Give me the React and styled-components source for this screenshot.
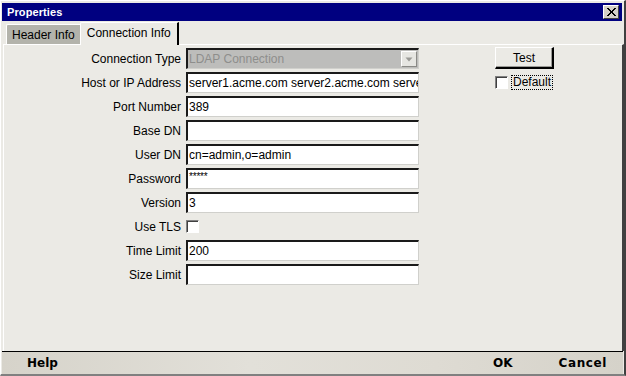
import React from "react";
import styled, { createGlobalStyle } from "styled-components";

const Global = createGlobalStyle`
  html, body { margin: 0; padding: 0; background: #ebeae5; }
  body { font-family: "Liberation Sans", Arial, sans-serif; font-size: 12px; color: #000; }
`;

const Window = styled.div`
  width: 626px;
  height: 376px;
  box-sizing: border-box;
  background: #ebeae5;
  border-style: solid;
  border-width: 1px 2px 2px 1px;
  border-color: #ffffff #404040 #808080 #ffffff;
  display: flex;
  flex-direction: column;
  padding: 2px 0 0 1px;
`;

const TitleBar = styled.div`
  height: 18px;
  margin-right: 2px;
  background: #000080;
  display: flex;
  align-items: center;
  justify-content: space-between;
  padding: 0 3px 0 5px;
`;

const Title = styled.span`
  color: #fff;
  font-weight: bold;
  font-size: 11px;
  letter-spacing: 0.1px;
`;

const CloseButton = styled.div`
  width: 16px;
  height: 14px;
  box-sizing: border-box;
  background: #d4d0c8;
  border-style: solid;
  border-width: 1px;
  border-color: #ffffff #404040 #404040 #ffffff;
  display: flex;
  align-items: center;
  justify-content: center;
`;

const TabStrip = styled.div`
  height: 22px;
  display: flex;
  align-items: flex-end;
  padding-left: 4px;
  margin-top: 1px;
`;

const Tab = styled.div`
  box-sizing: border-box;
  height: ${(p) => (p.$active ? "23px" : "20px")};
  padding: 0 ${(p) => (p.$active ? "6px" : "5px")};
  background: ${(p) => (p.$active ? "#ebeae5" : "#b3b3ab")};
  border-style: solid;
  border-width: 1px ${(p) => (p.$active ? "2px" : "0")} 0 1px;
  border-color: #ffffff #000 #000 #ffffff;
  border-top-left-radius: 2px;
  display: flex;
  align-items: center;
  padding-bottom: ${(p) => (p.$active ? "3px" : "0")};
  position: relative;
  z-index: ${(p) => (p.$active ? 1 : 0)};
  margin-bottom: ${(p) => (p.$active ? "-1px" : "0")};
`;

const Panel = styled.div`
  flex: 1;
  margin-left: 1px;
  border-style: solid;
  border-width: 1px 2px 0 1px;
  border-color: #ffffff #404040 #000 #ffffff;
  padding: 3px 0 0 2px;
`;

const FormGrid = styled.div`
  display: grid;
  grid-template-columns: 175px 233px 140px;
  column-gap: 5px;
  row-gap: 3px;
  grid-auto-rows: 21px;
`;

const Label = styled.div`
  display: flex;
  align-items: center;
  justify-content: flex-end;
  white-space: nowrap;
  font-size: 12px;
`;

const Field = styled.div`
  box-sizing: border-box;
  height: 21px;
  background: ${(p) => (p.$disabled ? "#bdbdbb" : "#ffffff")};
  color: ${(p) => (p.$disabled ? "#8e8e8c" : "#000")};
  border-style: solid;
  border-width: 2px 1px 1px 2px;
  border-color: #1a1a1a #d0d0cc #d0d0cc #1a1a1a;
  display: flex;
  align-items: center;
  padding-left: 1px;
  white-space: nowrap;
  overflow: hidden;
  font-size: 12px;
  position: relative;
`;

const PasswordText = styled.span`
  font-size: 10px;
  align-self: flex-start;
  margin-top: 1px;
  letter-spacing: -0.2px;
`;

const DropButton = styled.div`
  position: absolute;
  right: 1px;
  top: 1px;
  width: 16px;
  height: 16px;
  box-sizing: border-box;
  background: #e6e6e2;
  border-style: solid;
  border-width: 1px;
  border-color: #ffffff #8a8a86 #8a8a86 #ffffff;
  display: flex;
  align-items: center;
  justify-content: center;
`;

const CheckCell = styled.div`
  display: flex;
  align-items: center;
  gap: 4px;
  margin-left: ${(p) => p.$offset || "0"};
`;

const Checkbox = styled.div`
  width: 13px;
  height: 13px;
  box-sizing: border-box;
  background: #fff;
  border-style: solid;
  border-width: 1px;
  border-color: #808080 #ffffff #ffffff #808080;
  box-shadow: inset 1px 1px 0 #404040;
  flex: none;
`;

const FocusText = styled.span`
  outline: 1px dotted #000;
  outline-offset: 0;
  padding: 0 1px;
  line-height: 13px;
`;

const PushButton = styled.div`
  box-sizing: border-box;
  width: 59px;
  height: 22px;
  margin-top: -1px;
  margin-left: 71px;
  background: #ebeae5;
  border-style: solid;
  border-width: 1px 2px 2px 1px;
  border-color: #ffffff #000 #000 #ffffff;
  box-shadow: inset -1px -1px 0 #9a9a96;
  display: flex;
  align-items: center;
  justify-content: center;
`;

const Empty = styled.div``;

const BottomBar = styled.div`
  height: 22px;
  border-top: 1px solid #000;
  background: linear-gradient(90deg, #d6d3ca 0%, #e2e0d9 40%, #dedbd3 70%, #d5d2c9 100%);
  display: flex;
  align-items: center;
  padding: 0 16px 0 25px;
  margin-right: 1px;
`;

const BarButton = styled.span`
  font-family: "DejaVu Sans", Verdana, sans-serif;
  font-weight: bold;
  font-size: 12px;
  letter-spacing: ${(p) => p.$spacing || "0"};
  margin-left: ${(p) => p.$ml || "0"};
`;

const Spacer = styled.div`
  flex: 1;
`;

const rows = [
  { label: "Host or IP Address", value: "server1.acme.com server2.acme.com server3.acme.com" },
  { label: "Port Number", value: "389" },
  { label: "Base DN", value: "" },
  { label: "User DN", value: "cn=admin,o=admin" },
  { label: "Password", password: true },
  { label: "Version", value: "3" },
  { label: "Use TLS", check: true },
  { label: "Time Limit", value: "200" },
  { label: "Size Limit", value: "" },
];

export default function App() {
  return (
    <>
      <Global />
      <Window>
        <TitleBar>
          <Title>Properties</Title>
          <CloseButton>
            <svg width="10" height="9" viewBox="0 0 10 9">
              <path d="M1 0 L9 8 M2 0 L10 8 M9 0 L1 8 M10 0 L2 8" stroke="#000" strokeWidth="1" />
            </svg>
          </CloseButton>
        </TitleBar>
        <TabStrip>
          <Tab>Header Info</Tab>
          <Tab $active>Connection Info</Tab>
        </TabStrip>
        <Panel>
          <FormGrid>
            <Label>Connection Type</Label>
            <Field $disabled>
              LDAP Connection
              <DropButton>
                <svg width="8" height="5" viewBox="0 0 8 5">
                  <path d="M0.5 0.5 L7.5 0.5 L4 4.5 Z" fill="#9a9a96" />
                </svg>
              </DropButton>
            </Field>
            <PushButton>Test</PushButton>
            {rows.map((r, i) => (
              <React.Fragment key={r.label}>
                <Label>{r.label}</Label>
                {r.check ? (
                  <CheckCell>
                    <Checkbox />
                  </CheckCell>
                ) : (
                  <Field>
                    {r.password ? <PasswordText>*****</PasswordText> : r.value}
                  </Field>
                )}
                {i === 0 ? (
                  <CheckCell $offset="71px">
                    <Checkbox />
                    <FocusText>Default</FocusText>
                  </CheckCell>
                ) : (
                  <Empty />
                )}
              </React.Fragment>
            ))}
          </FormGrid>
        </Panel>
        <BottomBar>
          <BarButton>Help</BarButton>
          <Spacer />
          <BarButton>OK</BarButton>
          <BarButton $ml="46px" $spacing="0.6px">Cancel</BarButton>
        </BottomBar>
      </Window>
    </>
  );
}
